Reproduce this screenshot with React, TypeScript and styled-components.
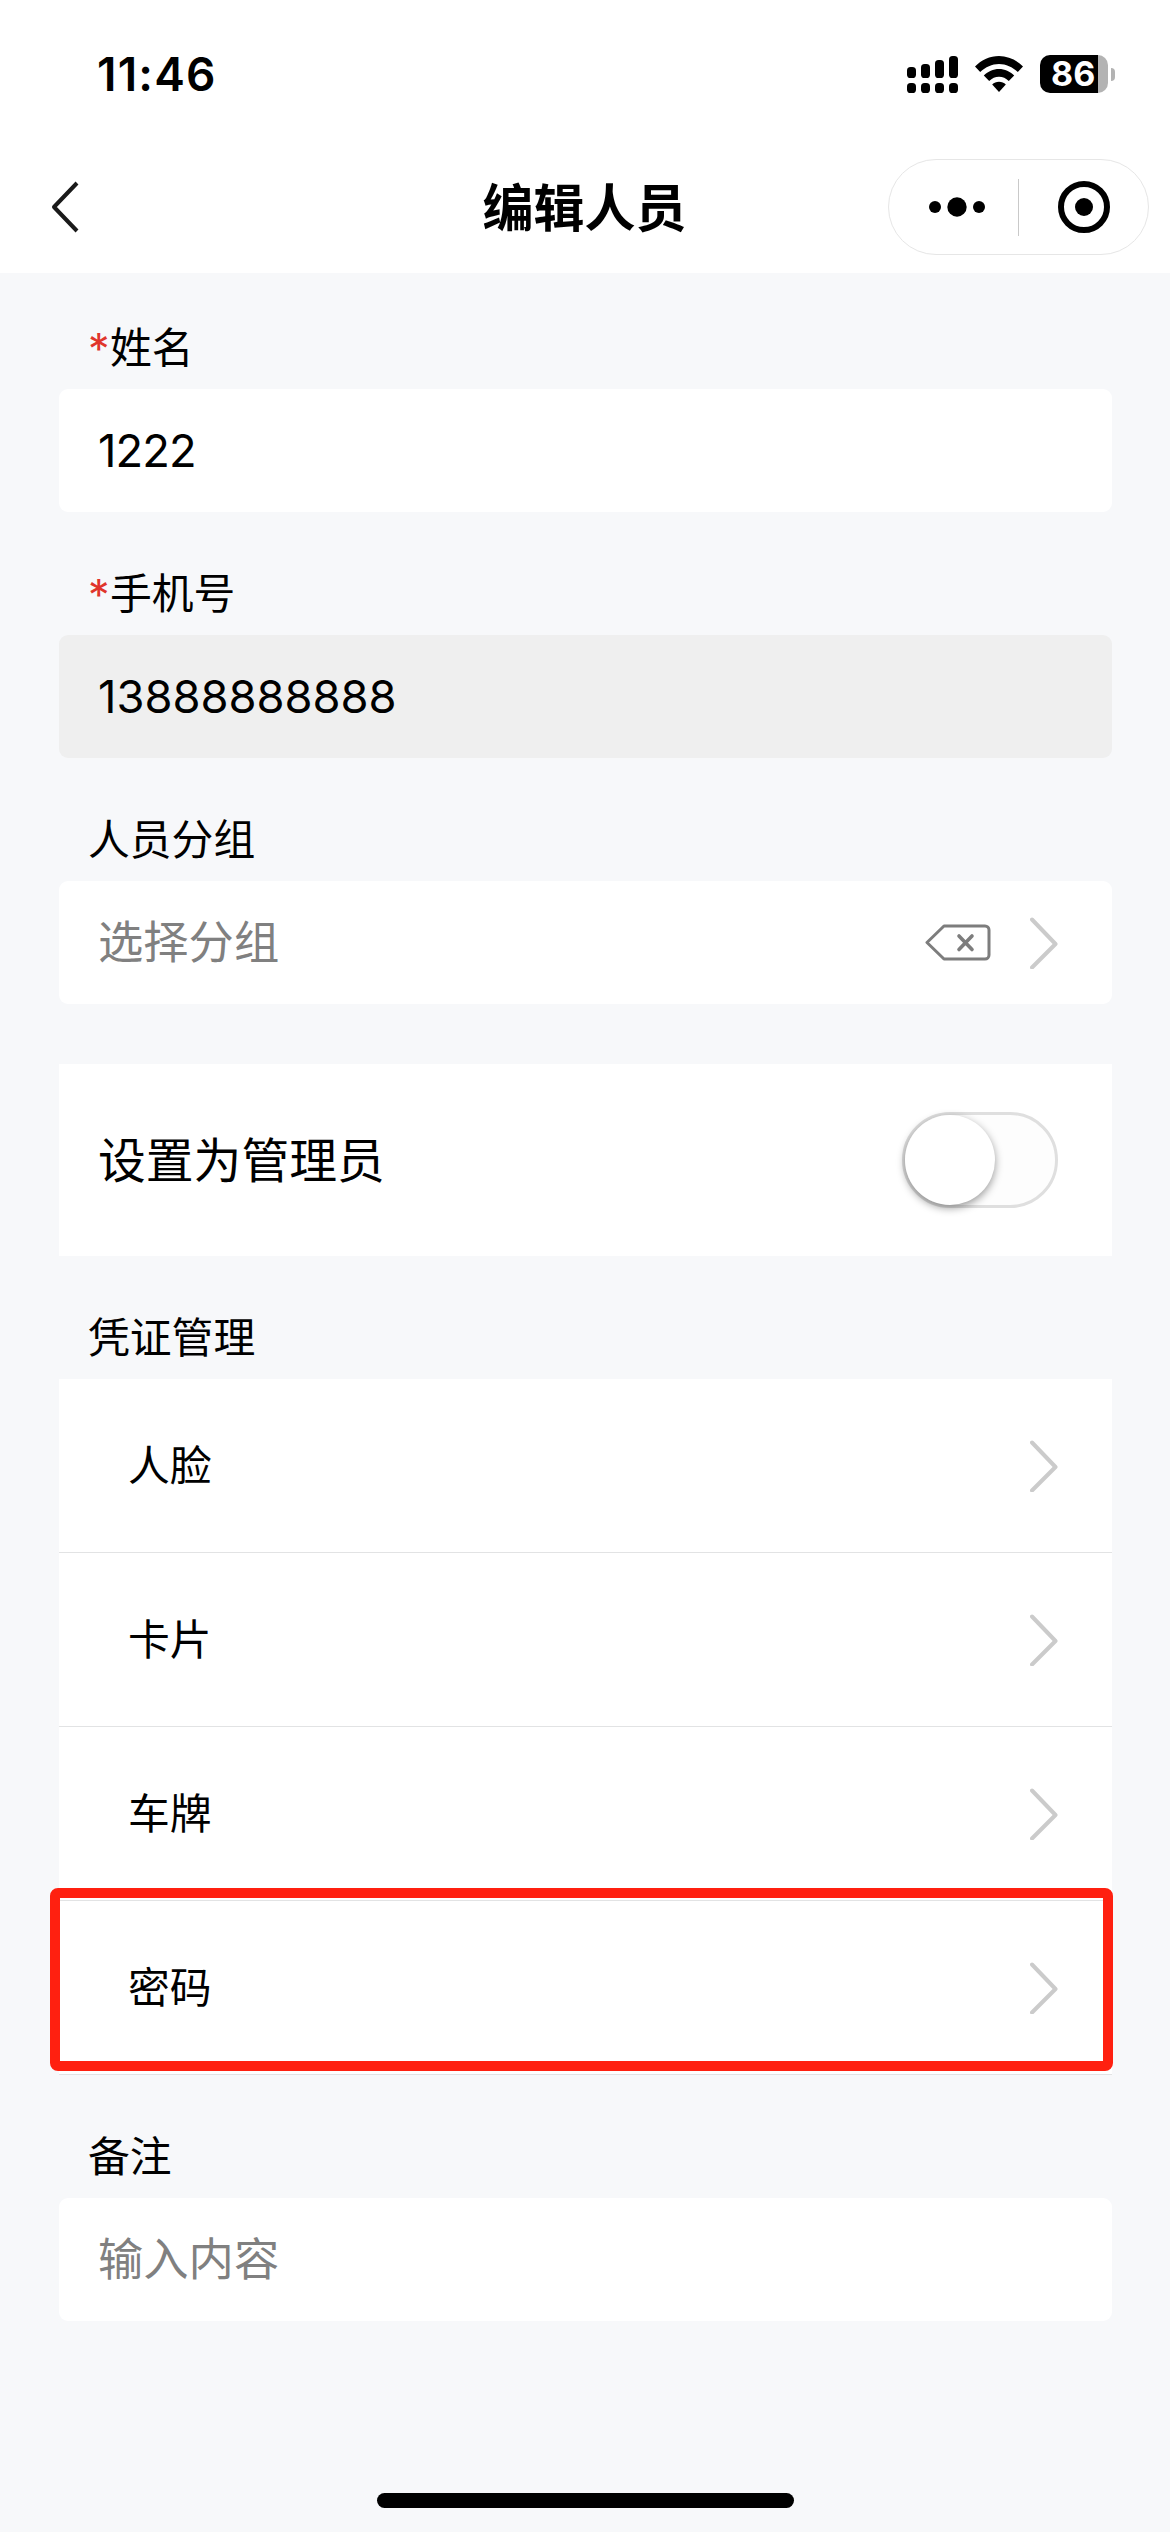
import React from "react";
import styled, { createGlobalStyle } from "styled-components";

const GlobalStyle = createGlobalStyle`
  * { box-sizing: border-box; }
  body {
    margin: 0;
    background: #f7f8fa;
    font-family: Inter, "Noto Sans CJK SC", sans-serif;
    color: #000;
  }
`;

const Page = styled.div`
  width: 1170px;
  height: 2532px;
  display: flex;
  flex-direction: column;
  background: #f7f8fa;
  overflow: hidden;
`;

const Header = styled.header`
  height: 273px;
  background: #fff;
  display: flex;
  flex-direction: column;
`;

const StatusBar = styled.div`
  height: 148px;
  display: flex;
  align-items: center;
  justify-content: space-between;
  padding: 0 55px 0 97px;
`;

const Time = styled.span`
  font-size: 46px;
  font-weight: 600;
  line-height: 54px;
  letter-spacing: 1.2px;
`;

const StatusIcons = styled.div`
  display: flex;
  align-items: center;
  gap: 17px;
`;

const Battery = styled.div`
  display: flex;
  align-items: center;
  gap: 3px;
`;

const BatteryBody = styled.div`
  width: 68px;
  height: 38px;
  border-radius: 10px;
  background: linear-gradient(to right, #000 58px, #b3b3b3 58px);
  color: #fff;
  font-size: 34px;
  font-weight: 700;
  line-height: 38px;
  padding-left: 11px;
`;

const BatteryTip = styled.div`
  width: 4px;
  height: 13px;
  border-radius: 0 6px 6px 0;
  background: #b3b3b3;
`;

const NavBar = styled.div`
  height: 118px;
  display: grid;
  grid-template-columns: 281px 1fr 281px;
  align-items: center;
  padding-right: 1px;
`;

const BackButton = styled.button`
  border: 0;
  background: none;
  padding: 0 0 0 50px;
  display: flex;
  justify-self: start;
`;

const Title = styled.h1`
  margin: 0;
  padding-bottom: 4px;
  text-align: center;
  font-family: "Noto Sans CJK SC", sans-serif;
  font-size: 51px;
  font-weight: 700;
  line-height: 60px;
`;

const Capsule = styled.div`
  width: 261px;
  height: 96px;
  border: 1.5px solid #e6e6e6;
  border-radius: 48px;
  display: flex;
  align-items: center;
`;

const CapsuleButton = styled.button<{ $width: number; $shift?: number }>`
  width: ${(p) => p.$width}px;
  border: 0;
  padding: 0 0 0 ${(p) => p.$shift ?? 0}px;
  background: none;
  display: flex;
  justify-content: center;
`;

const CapsuleDivider = styled.div`
  width: 1px;
  height: 57px;
  background: #c9c9c9;
`;

const Form = styled.main`
  flex: 1;
  padding: 0 58px 0 59px;
`;

const Section = styled.section<{ $gap: number }>`
  padding-top: ${(p) => p.$gap}px;
`;

const Label = styled.div`
  height: 64px;
  padding: 2px 0 0 29px;
  font-size: 41.8px;
  line-height: 62px;
  margin-bottom: 10px;
  display: flex;
`;

const Required = styled.span`
  color: #e0352b;
  width: 22px;
  font-size: 43px;
`;

const Field = styled.div<{ $disabled?: boolean; $muted?: boolean }>`
  height: 123px;
  border-radius: 9px;
  background: ${(p) => (p.$disabled ? "#efefef" : "#fff")};
  color: ${(p) => (p.$muted ? "#808080" : "#000")};
  display: flex;
  align-items: center;
  padding: 0 54px 0 39px;
  font-size: 45.3px;
  line-height: 64px;
`;

const Value = styled.span<{ $tracking?: number }>`
  flex: 1;
  letter-spacing: ${(p) => p.$tracking ?? 0}px;
`;

const FieldActions = styled.div`
  display: flex;
  align-items: center;
  gap: 39px;
`;

const SwitchRow = styled.div`
  height: 192px;
  margin-top: 60px;
  background: #fff;
  display: flex;
  align-items: center;
  justify-content: space-between;
  padding: 0 54px 0 39px;
  font-size: 47.8px;
`;

const RowText = styled.span`
  line-height: 64px;
  padding-top: 1px;
`;

const Track = styled.div`
  width: 156px;
  height: 96px;
  border: 3px solid #dfdfdf;
  border-radius: 48px;
  background: #fdfdfd;
`;

const Knob = styled.div`
  width: 90px;
  height: 90px;
  border-radius: 50%;
  background: #fff;
  box-shadow: 0 3px 9px rgba(0, 0, 0, 0.4);
`;

const List = styled.div`
  background: #fff;
`;

const ListRow = styled.div`
  position: relative;
  height: 174px;
  border-bottom: 1px solid #e2e3e4;
  display: flex;
  align-items: center;
  justify-content: space-between;
  padding: 0 54px 0 69px;
  font-size: 41.8px;
`;

const Highlight = styled.div`
  position: absolute;
  left: -9px;
  top: -13px;
  width: 1063px;
  height: 183px;
  border: 10px solid #ff2010;
  border-radius: 8px;
`;

const HomeArea = styled.footer`
  height: 39px;
  display: flex;
  justify-content: center;
`;

const HomeIndicator = styled.div`
  width: 417px;
  height: 15px;
  border-radius: 8px;
  background: #000;
`;

const SignalIcon = () => (
  <svg width="51" height="38" viewBox="0 0 51 38">
    {[12, 9, 5, 1].map((top, i) => (
      <React.Fragment key={top}>
        <rect x={i * 14} y={top} width="9" height={23 - top} rx="3.6" />
        <rect x={i * 14} y="28" width="9" height="10" rx="3.6" />
      </React.Fragment>
    ))}
  </svg>
);

const WifiIcon = () => (
  <svg width="48" height="36" viewBox="0 0 48 36">
    <path d="M0 10.5C6.5 4 15 0 24 0s17.500 4 24 10.500l-5.200 5.500C37.500 11 31 8 24 8s-13.500 3-18.800 8z" />
    <path d="M8.800 19.500C13 15.500 18.200 13 24 13s11 2.500 15.200 6.500L33.800 25C31 22.300 27.700 20.800 24 20.800S17 22.300 14.200 25z" />
    <path d="M17.200 28.600C19 26.800 21.300 25.800 24 25.800s5 1 6.800 2.800L24 36z" />
  </svg>
);

const BackIcon = () => (
  <svg width="30" height="54" viewBox="0 0 30 54" fill="none">
    <path d="M27 3L4 27l23 24" stroke="#1a1a1a" strokeWidth="4" strokeLinejoin="round" />
  </svg>
);

const MoreIcon = () => (
  <svg width="58" height="20" viewBox="0 0 58 20">
    <circle cx="7" cy="10" r="6" />
    <circle cx="29" cy="10" r="9.700" />
    <circle cx="51" cy="10" r="6" />
  </svg>
);

const TargetIcon = () => (
  <svg width="52" height="52" viewBox="0 0 52 52">
    <circle cx="26" cy="26" r="23" fill="none" stroke="#000" strokeWidth="6" />
    <circle cx="26" cy="26" r="9" />
  </svg>
);

const ClearIcon = () => (
  <svg width="66" height="37" viewBox="0 0 66 37" fill="none" stroke="#7d7d7d" strokeWidth="3">
    <path d="M19 2H60a4 4 0 0 1 4 4V31a4 4 0 0 1-4 4H19L2 18.500z" strokeLinejoin="round" />
    <path d="M34 12L47 25.500M47 12L34 25.500" strokeWidth="3.600" strokeLinecap="round" />
  </svg>
);

const ArrowIcon = () => (
  <svg width="28" height="52" viewBox="0 0 28 52" fill="none">
    <path d="M2 2.500L25.500 27L2 50.500" stroke="#cbcbcb" strokeWidth="4" strokeLinecap="round" strokeLinejoin="round" />
  </svg>
);

const credentials = [
  { name: "人脸" },
  { name: "卡片" },
  { name: "车牌" },
  { name: "密码", highlighted: true },
];

export default function App() {
  return (
    <>
      <GlobalStyle />
      <Page>
        <Header>
          <StatusBar>
            <Time>11:46</Time>
            <StatusIcons>
              <SignalIcon />
              <WifiIcon />
              <Battery>
                <BatteryBody>86</BatteryBody>
                <BatteryTip />
              </Battery>
            </StatusIcons>
          </StatusBar>
          <NavBar>
            <BackButton aria-label="返回">
              <BackIcon />
            </BackButton>
            <Title>编辑人员</Title>
            <Capsule>
              <CapsuleButton $width={129} $shift={7} aria-label="更多">
                <MoreIcon />
              </CapsuleButton>
              <CapsuleDivider />
              <CapsuleButton $width={129} aria-label="关闭">
                <TargetIcon />
              </CapsuleButton>
            </Capsule>
          </NavBar>
        </Header>
        <Form>
          <Section $gap={42}>
            <Label>
              <Required>*</Required>姓名
            </Label>
            <Field>
              <Value $tracking={-0.9}>1222</Value>
            </Field>
          </Section>
          <Section $gap={49}>
            <Label>
              <Required>*</Required>手机号
            </Label>
            <Field $disabled>
              <Value>13888888888</Value>
            </Field>
          </Section>
          <Section $gap={49}>
            <Label>人员分组</Label>
            <Field $muted>
              <Value>选择分组</Value>
              <FieldActions>
                <ClearIcon />
                <ArrowIcon />
              </FieldActions>
            </Field>
          </Section>
          <SwitchRow>
            <RowText>设置为管理员</RowText>
            <Track>
              <Knob />
            </Track>
          </SwitchRow>
          <Section $gap={49}>
            <Label>凭证管理</Label>
            <List>
              {credentials.map((item) => (
                <ListRow key={item.name}>
                  <RowText>{item.name}</RowText>
                  <ArrowIcon />
                  {item.highlighted && <Highlight />}
                </ListRow>
              ))}
            </List>
          </Section>
          <Section $gap={49}>
            <Label>备注</Label>
            <Field $muted>
              <Value>输入内容</Value>
            </Field>
          </Section>
        </Form>
        <HomeArea>
          <HomeIndicator />
        </HomeArea>
      </Page>
    </>
  );
}
